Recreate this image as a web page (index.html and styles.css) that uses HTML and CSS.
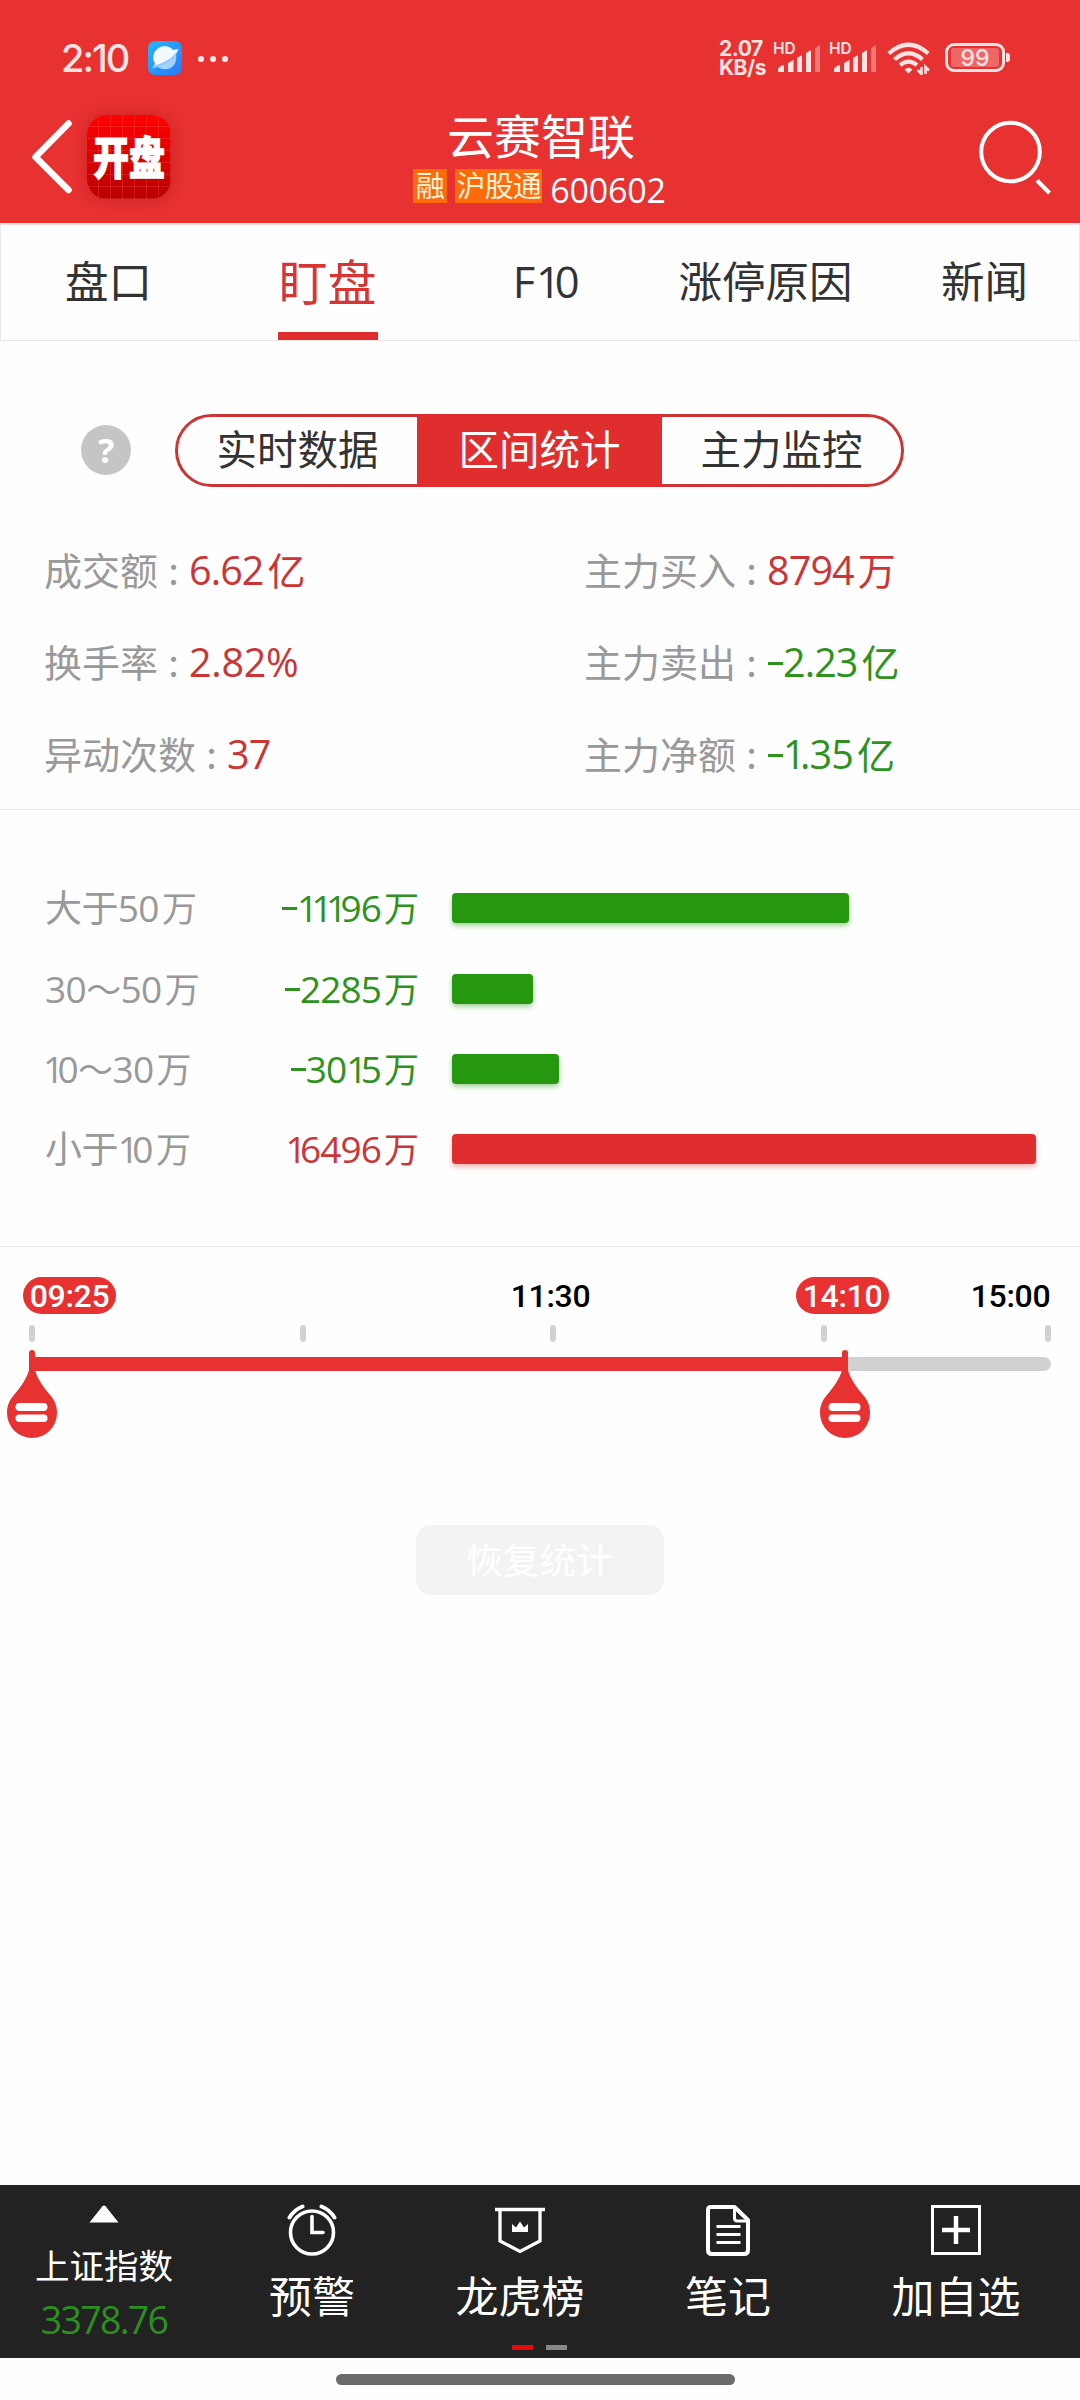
FILE: index.html
```html
<!DOCTYPE html>
<html lang="zh-CN">
<head>
<meta charset="utf-8">
<title>云赛智联 600602</title>
<link rel="stylesheet" href="styles.css">
</head>
<body>
<header class="header">
  <div class="status">
    <span class="clock">2:10</span>
    <svg class="planet" width="34" height="34" viewBox="0 0 34 34">
      <defs><linearGradient id="sky" x1="0" y1="0" x2="1" y2="1"><stop offset="0" stop-color="#20b8fb"/><stop offset="1" stop-color="#2f77f8"/></linearGradient></defs>
      <rect width="34" height="34" rx="7" fill="url(#sky)"/>
      <circle cx="17" cy="17" r="11.3" fill="#a3d3fb"/>
      <path d="M7 22.5A11.3 11.3 0 0 1 25 9L30.500 8C30 14 20 24 4.500 27.500C4.500 25 5.500 24 7 22.500Z" fill="#8cc8fb"/>
      <path d="M7 22.5A11.3 11.3 0 0 1 25 9L30.500 8C27 15 17 22 7 24.500Z" fill="#f3faff"/>
    </svg>
    <svg class="dots" width="32" height="8" viewBox="0 0 32 8" fill="#ffe3e3"><circle cx="4" cy="4" r="3.1"/><circle cx="16" cy="4" r="3.1"/><circle cx="28" cy="4" r="3.1"/></svg>
    <span class="speed">2.07<br>KB/s</span>
    <svg class="signal" width="48" height="34" viewBox="0 0 48 34" fill="#ffe3e3">
      <text class="hd" x="0" y="13">HD</text>
      <path d="M5 31V28Q7 24.500 11 24V31ZM15 31V22L20.500 19V31ZM24 31V17L29 14V31ZM33 31V12L38 9V31Z"/><path d="M42 31V7L47 4V31Z" opacity=".4"/>
    </svg>
    <svg class="signal second" width="48" height="34" viewBox="0 0 48 34" fill="#ffe3e3">
      <text class="hd" x="0" y="13">HD</text>
      <path d="M5 31V28Q7 24.500 11 24V31ZM15 31V22L20.500 19V31ZM24 31V17L29 14V31ZM33 31V12L38 9V31Z"/><path d="M42 31V7L47 4V31Z" opacity=".4"/>
    </svg>
    <svg class="wifi" width="44" height="34" viewBox="0 0 44 34" fill="none" stroke="#ffe3e3" stroke-width="4.200">
      <path d="M1.800 12.500Q21.500-5 41.200 12.500M7.500 18.500Q21.500 6 35.500 18.500M13 24.200Q21.500 17 30 24.200"/>
      <path d="M17.500 28.500Q21.500 25.200 25.500 28.500L21.500 32.500Z" fill="#ffe3e3" stroke="none"/>
      <path d="M34.500 26V33L30.500 29M38.500 33V26L42 29.500" stroke-width="2.600"/>
    </svg>
    <span class="battery"><span class="charge">99</span></span>
  </div>
  <div class="titlebar">
    <svg class="back" width="42" height="76" viewBox="0 0 42 76" fill="none" stroke="#fff" stroke-width="6.500" stroke-linecap="round" stroke-linejoin="round"><path d="M38.500 4.500L5.500 38L38.500 71"/></svg>
    <div class="logo"><span class="logo-text">开盘</span></div>
    <div class="stock">
      <h1 class="name">云赛智联</h1>
      <div class="meta"><span class="badge">融</span><span class="badge wide">沪股通</span><span class="code">600602</span></div>
    </div>
    <svg class="search" width="74" height="76" viewBox="0 0 74 76" fill="none" stroke="#fff" stroke-width="4"><circle cx="31.500" cy="32" r="29.300"/><path d="M58 60.500L70.500 73"/></svg>
  </div>
</header>
<nav class="tabs">
  <div class="tab">盘口</div><div class="tab active">盯盘</div><div class="tab f10">F<u class="one">1</u>0</div><div class="tab">涨停原因</div><div class="tab">新闻</div>
</nav>
<main class="content">
  <div class="switch-row">
    <span class="help">?</span>
    <div class="segments"><span class="segment">实时数据</span><span class="segment selected">区间统计</span><span class="segment">主力监控</span></div>
  </div>
  <section class="stats">
    <div class="stat">成交额<i class="colon">:</i><b class="value red">6.62<em>亿</em></b></div>
    <div class="stat">主力买入<i class="colon">:</i><b class="value red">8794<em>万</em></b></div>
    <div class="stat">换手率<i class="colon">:</i><b class="value red percent">2.82%</b></div>
    <div class="stat">主力卖出<i class="colon">:</i><b class="value green"><s class="minus"></s>2.23<em>亿</em></b></div>
    <div class="stat">异动次数<i class="colon">:</i><b class="value red">37</b></div>
    <div class="stat">主力净额<i class="colon">:</i><b class="value green"><s class="minus"></s><u class="one">1</u>.35<em>亿</em></b></div>
  </section>
  <section class="flows">
    <div class="flow"><span class="range">大于50<em>万</em></span><span class="amount green"><s class="minus"></s><u class="one">111</u>96<em>万</em></span><span class="bar sell" style="width:397px"></span></div>
    <div class="flow"><span class="range">30<u class="tilde">～</u>50<em>万</em></span><span class="amount green"><s class="minus"></s>2285<em>万</em></span><span class="bar sell" style="width:81px"></span></div>
    <div class="flow"><span class="range first-one"><u class="one">1</u>0<u class="tilde">～</u>30<em>万</em></span><span class="amount green"><s class="minus"></s>30<u class="one">1</u>5<em>万</em></span><span class="bar sell" style="width:107px"></span></div>
    <div class="flow"><span class="range">小于<u class="one">1</u>0<em>万</em></span><span class="amount red"><u class="one">1</u>6496<em>万</em></span><span class="bar buy" style="width:584px"></span></div>
  </section>
  <section class="timeline">
    <div class="times"><span class="time pill">09:25</span><span class="time mid">11:30</span><span class="time pill end">14:10</span><span class="time close">15:00</span></div>
    <svg class="slider" width="1080" height="116" viewBox="0 0 1080 116">
      <g fill="#d1d1d1"><rect x="29" y="1" width="6" height="17" rx="3"/><rect x="300" y="1" width="6" height="17" rx="3"/><rect x="550" y="1" width="6" height="17" rx="3"/><rect x="821" y="1" width="6" height="17" rx="3"/><rect x="1045" y="1" width="6" height="17" rx="3"/><rect x="29" y="33" width="1022" height="14" rx="7"/></g>
      <path d="M32 33H845V47H32Z" fill="#e83131"/>
      <g id="pin"><path d="M29 29Q29 26 32 26Q35 26 35 29V46C37 54 43 63 50.500 71.500C55 77 57 82 57 89A25 25 0 0 1 7 89C7 82 9 77 13.500 71.500C21 63 27 54 29 46Z" fill="#e83131"/><rect x="15.500" y="79" width="32" height="8" rx="4" fill="#fff"/><rect x="15.500" y="90.500" width="32" height="7.500" rx="3.700" fill="#fff"/></g>
      <use href="#pin" x="813"/>
    </svg>
    <button class="reset">恢复统计</button>
  </section>
</main>
<footer class="footer">
  <div class="toolbar">
    <div class="item index"><svg class="caret" width="30" height="18" viewBox="0 0 30 18"><path d="M13.500 1.200Q15 0 16.500 1.200L29.500 17.500H.5Z" fill="#fff"/></svg><span class="index-name">上证指数</span><span class="index-value">3378.76</span></div>
    <div class="item">
      <svg width="50" height="52" viewBox="0 0 50 52" fill="none" stroke="#fff"><circle cx="25" cy="28.500" r="21.500" stroke-width="3.600"/><path d="M25 12.500V28.500H36" stroke-width="3.600" stroke-linecap="round"/><path d="M2.500 13.500Q7.500 5.500 15.500 2.500M34.500 2.500Q42.500 5.500 47.500 13.500" stroke-width="4" stroke-linecap="round"/></svg>
      <span>预警</span>
    </div>
    <div class="item">
      <svg width="52" height="52" viewBox="0 0 52 52" fill="none" stroke="#fff" stroke-width="3.300"><path d="M1 5.500H51M6 5.500V37L26 47.500L46 37V5.500"/><path d="M18 28V20L22 23.500L26 17.500L30 23.500L34 20V28Z" fill="#fff" stroke="none"/></svg>
      <span>龙虎榜</span>
    </div>
    <div class="item">
      <svg width="46" height="52" viewBox="0 0 46 52" fill="none" stroke="#fff" stroke-width="4" stroke-linejoin="round"><path d="M6 3H29.500L43 16V46Q43 50 39 50H7Q3 50 3 46V6Q3 3 6 3Z"/><path d="M29.500 3V14Q29.500 17 32.500 17H43" stroke-width="3"/><path d="M11.500 22.500H35.500M11.500 30.500H35.500M11.500 38.500H35.500" stroke-width="2.800"/></svg>
      <span>笔记</span>
    </div>
    <div class="item add">
      <svg width="50" height="52" viewBox="0 0 50 52" fill="none" stroke="#fff"><rect x="1.500" y="2.500" width="47" height="47" stroke-width="3"/><path d="M11 26H39M25 12V40" stroke-width="4.500"/></svg>
      <span>加自选</span>
    </div>
  </div>
  <div class="pages"><span class="page current"></span><span class="page"></span></div>
</footer>
<div class="home"></div>
</body>
</html>
```
FILE: styles.css
```css
* { box-sizing: border-box; }
body { margin: 0; width: 1080px; height: 2400px; display: flex; flex-direction: column; background: #fefefe; color: #333; font-family: "Open Sans", "Noto Sans CJK SC", sans-serif; overflow: hidden; }
i, b, em, u, s { font-style: normal; font-weight: normal; text-decoration: none; }
svg { display: block; flex: none; }
.red { color: #cb3535; }
.green { color: #2d931c; }

.header { height: 225px; flex: none; background: #e83131; border-bottom: 2px solid #fde0e0; color: #fff; }
.status { height: 115px; display: flex; align-items: center; padding-left: 61px; color: #ffe3e3; }
.clock { width: 87px; font: 500 38px/40px Inter, sans-serif; letter-spacing: -2px; }
.planet { margin-top: 1px; }
.dots { margin: 2px 0 0 15px; }
.speed { width: 54px; margin-left: 490px; font: 700 21px/19px Inter, sans-serif; letter-spacing: -.5px; white-space: nowrap; margin-top: 1px; }
.signal { overflow: visible; }
.second { margin-left: 8px; }
.hd { font: 600 15.500px Inter, sans-serif; }
.wifi { margin-left: 10px; }
.battery { width: 60px; height: 29px; margin-left: 14px; border: 3px solid #ffe3e3; border-radius: 9px; padding: 2px 3px; position: relative; }
.battery::after { content: ""; position: absolute; right: -8px; top: 7px; width: 4px; height: 9px; border-radius: 0 3px 3px 0; background: #ffe3e3; }
.charge { display: block; height: 19px; border-radius: 3px; background: #f06666; text-align: center; font: 500 23px/20px Inter, sans-serif; }

.titlebar { display: flex; height: 108px; padding-left: 30px; }
.back { margin-top: 4px; }
.logo { width: 84px; height: 84px; flex: none; margin-left: 15px; border-radius: 20px; box-shadow: 0 0 15px rgba(120, 0, 0, .3); display: flex; align-items: center; justify-content: center; background: repeating-linear-gradient(90deg, transparent 0 11px, rgba(255, 120, 120, .22) 11px 12px), repeating-linear-gradient(transparent 0 11px, rgba(255, 120, 120, .22) 11px 12px), linear-gradient(#f00, #b90000); }
.logo-text { font: 900 36px/40px "Noto Sans CJK SC", sans-serif; transform: scaleY(1.25); margin-top: -5px; -webkit-text-stroke: 1px #fff; }
.stock { width: 740px; display: flex; flex-direction: column; align-items: center; }
.name { margin: -4px 0 0; font-size: 47px; line-height: 50px; font-weight: 400; }
.meta { display: flex; height: 34px; margin: 8px 0 0; align-items: center; padding-right: 3px; }
.badge { width: 34px; height: 34px; font-size: 29px; line-height: 33px; text-align: center; background: #ff6a0a; color: #fff4d8; }
.wide { width: 87px; margin-left: 8px; letter-spacing: -.8px; }
.code { font-size: 34px; line-height: 38px; letter-spacing: -.2px; margin: 7px 0 0 8px; }
.search { margin: 5px 0 0 68px; }

.tabs { height: 116px; flex: none; display: grid; grid-template-columns: repeat(5, 219px); overflow: hidden; border: 1px solid #e8e8e8; border-top: 0; }
.tab { margin-left: -2px; width: 219px; text-align: center; font-size: 43.500px; line-height: 114px; }
.f10 { letter-spacing: .8px; }
.active { color: #d93434; font-size: 49px; display: flex; flex-direction: column; align-items: center; }
.active::after { content: ""; width: 100px; height: 9px; flex: none; background: #e02e2e; margin-top: -7px; }

.content { flex: 1; }
.switch-row { display: flex; align-items: center; padding: 73px 0 0 81px; }
.help { width: 50px; height: 50px; margin-top: -1px; border-radius: 50%; background: #c5c5c5; color: #fff; text-align: center; font: 700 34px/50px "Noto Sans", sans-serif; }
.segments { width: 729px; height: 73px; margin-left: 44px; display: grid; grid-template-columns: 239px 245px 239px; border: 3px solid #cb3535; border-radius: 37px; }
.segment { font-size: 40.500px; line-height: 66px; text-align: center; }
.selected { color: #fff; background: #e02e2e; margin: -3px 0; line-height: 72px; }
.stats { height: 323px; padding: 37px 0 0 44px; display: grid; grid-template-columns: 540px 1fr; grid-auto-rows: 92px; border-bottom: 1px solid #e8e8e8; }
.stat { color: #999; font-size: 38px; line-height: 92px; display: flex; white-space: nowrap; }
.colon { width: 31px; text-align: center; font-family: "Noto Sans CJK SC", sans-serif; line-height: 90px; }
.value { font-size: 39.500px; letter-spacing: -.9px; line-height: 93px; }
.value em { font-size: 38px; letter-spacing: 0; margin-left: 4px; }
.percent { letter-spacing: -.3px; }
.minus { display: inline-block; width: 15px; height: 3px; margin: 0 0 12px 1px; background: currentColor; vertical-align: baseline; }
.one { letter-spacing: -.14em; }
.flows { height: 437px; padding: 58px 0 0 45px; border-bottom: 1px solid #e8e8e8; }
.flow { height: 80.400px; display: flex; align-items: center; font-size: 37px; line-height: 79px; white-space: nowrap; }
.range { width: 206px; color: #999; letter-spacing: -.6px; }
.first-one { text-indent: -2px; }
.flow em { font-size: 35px; letter-spacing: 0; margin-left: 3px; }
.tilde { font-size: 35px; }
.amount { width: 168px; text-align: right; letter-spacing: -.9px; }
.flow .one { letter-spacing: -.18em; }
.bar { height: 30px; margin-left: 33px; border-radius: 4px; }
.sell { background: #259810; box-shadow: 0 3px 5px rgba(37, 152, 16, .4); }
.buy { background: #e02e2e; box-shadow: 0 3px 5px rgba(224, 46, 46, .35); }
.times { display: flex; padding: 30px 0 0 23px; font: 500 32px/39px Roboto, sans-serif; color: #000; }
.time { width: 93px; height: 37px; text-align: center; letter-spacing: -.3px; }
.pill { border-radius: 19px; background: #e83131; color: #fff; }
.mid { margin-left: 388px; }
.end { margin-left: 199px; }
.close { margin-left: 75px; }
.slider { margin-top: 10px; }
.reset { display: block; width: 248px; height: 70px; margin: 85px auto 0; padding: 0 1px 2px 0; border: 0; border-radius: 15px; background: #f3f3f3; color: #fff; font: 36.500px/66px "Noto Sans CJK SC", sans-serif; }

.footer { height: 173px; flex: none; background: #222; color: #fff; }
.toolbar { height: 160px; display: grid; grid-template-columns: 208px 208px 208px 208px 248px; }
.item { display: flex; flex-direction: column; align-items: center; padding-top: 19px; font-size: 43px; line-height: 60px; }
.item svg { margin-bottom: 11px; }
.index { padding-top: 20px; }
.index .caret { margin-bottom: 18px; }
.index-name { font-size: 34.500px; line-height: 50px; }
.index-value { font-size: 37.500px; line-height: 50px; margin-top: 4px; color: #2d8f20; letter-spacing: -1.700px; }
.pages { display: flex; gap: 13px; padding-left: 512px; }
.page { width: 21px; height: 5px; background: #888; }
.current { background: #e60a0a; }
.home { flex: none; height: 11px; width: 399px; margin: 16px 0 15px 336px; border-radius: 6px; background: #6b6b6b; }
```
